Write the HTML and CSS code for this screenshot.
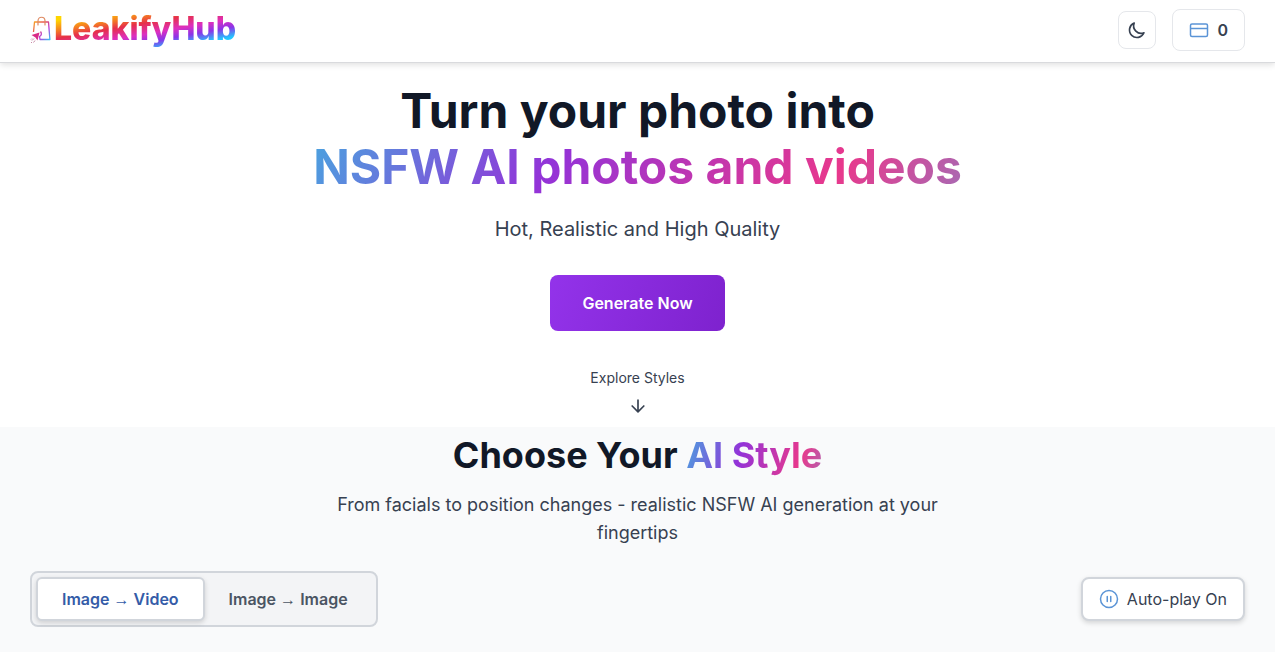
FILE: index.html
```html
<!DOCTYPE html>
<html lang="en">
<head>
    <meta charset="UTF-8">
    <meta name="viewport" content="width=device-width, initial-scale=1.0">
    <title>LeakifyHub</title>
    <link rel="stylesheet" href="styles.css">
</head>
<body>
    <header class="header">
        <a href="#" class="logo">
            <svg class="logo-icon" viewBox="0 0 22 30" fill="none" aria-hidden="true">
                <defs>
                    <linearGradient id="bag" x1="0" y1="0" x2="1" y2="1">
                        <stop offset="0" stop-color="#f6a623"/>
                        <stop offset="0.35" stop-color="#e8505a"/>
                        <stop offset="0.65" stop-color="#b43be0"/>
                        <stop offset="1" stop-color="#35c4f0"/>
                    </linearGradient>
                </defs>
                <path d="M3.500 17 4.500 7h14l1.400 17.500H10l-.5-3c2-1 2.500-3 1-5" stroke="url(#bag)" stroke-width="1.300" stroke-linejoin="round"/>
                <path d="M8 10V6c0-5 7-5 7 0v4" stroke="#df8a62" stroke-width="1.200" stroke-linecap="round"/>
                <path d="m1.500 20 8-2.500-2 8-2-3z" fill="#d92c86"/>
                <path d="m4 23.500-2 2M2 23.500l-1 1m4 1-1.500 2M1 27.500h1" stroke="#c98ba8" stroke-width="1"/>
            </svg>
            <span class="logo-text">LeakifyHub</span>
        </a>
        <div class="header-actions">
            <button type="button" class="theme-btn" aria-label="Toggle theme">
                <svg width="20" height="20" viewBox="0 0 24 24" fill="none" stroke="currentColor" stroke-width="2" stroke-linecap="round" stroke-linejoin="round"><path d="M20.354 15.354A9 9 0 0 1 8.646 3.646 9 9 0 1 0 20.354 15.354z"/></svg>
            </button>
            <button type="button" class="credits-btn">
                <svg width="20" height="20" viewBox="0 0 20 20" fill="none" stroke="#5b94d6" stroke-width="1.500"><rect x="1.500" y="4" width="17" height="12.500" rx="1.500"/><path d="M1.500 8.500h17"/></svg>
                <span>0</span>
            </button>
        </div>
    </header>

    <main>
        <!-- hero -->
        <section class="hero">
            <h1>Turn your photo into<br><span class="gradient-text">NSFW AI photos and videos</span></h1>
            <p class="hero-sub">Hot, Realistic and High Quality</p>
            <button type="button" class="cta">Generate Now</button>
            <a href="#styles" class="explore">
                <span>Explore Styles</span>
                <svg width="20" height="20" viewBox="0 0 24 24" fill="none" stroke="currentColor" stroke-width="2" stroke-linecap="round" stroke-linejoin="round"><path d="M12 5v14M5 12l7 7 7-7"/></svg>
            </a>
        </section>

        <!-- styles -->
        <section class="styles" id="styles">
            <h2>Choose Your <span class="gradient-text">AI Style</span></h2>
            <p class="styles-sub">From facials to position changes - realistic NSFW AI generation at your fingertips</p>
            <div class="toolbar">
                <div class="tabs">
                    <button type="button" class="tab active">Image <span class="arrow">→</span> Video</button>
                    <button type="button" class="tab">Image <span class="arrow">→</span> Image</button>
                </div>
                <button type="button" class="autoplay">
                    <svg width="20" height="20" viewBox="0 0 20 20" fill="none" stroke="#5b94d6" stroke-width="1.500" stroke-linecap="round"><circle cx="10" cy="10" r="8.500"/><path d="M8.250 7.500v5M11.750 7.500v5"/></svg>
                    <span>Auto-play On</span>
                </button>
            </div>
        </section>
    </main>
</body>
</html>
```
FILE: styles.css
```css
* {
    margin: 0;
    padding: 0;
    box-sizing: border-box;
}
body {
    font-family: Inter, "Liberation Sans", sans-serif;
    color: #374151;
    background-color: #fff;
    line-height: 24px;
}
button {
    font: inherit;
    color: inherit;
    cursor: pointer;
}
a {
    color: inherit;
    text-decoration: none;
}
svg {
    display: block;
    flex-shrink: 0;
}

/* header */
.header {
    display: flex;
    justify-content: space-between;
    align-items: center;
    padding: 9px 30px 11px;
    border-bottom: 1px solid #d9dadd;
    box-shadow: 0 2px 6px rgba(0, 0, 0, .12);
}
.logo {
    display: flex;
    align-items: center;
    gap: 2px;
}
.logo-icon {
    width: 22px;
    height: 30px;
}
.logo-text {
    padding-bottom: 2px;
    font-size: 32px;
    font-weight: 800;
    line-height: 36px;
    background: linear-gradient(170deg, #ffd500 14%, #f58220 28%, #e6304a 40%, #dd2fc0 56%, #8a35e8 68%, #22c7ff 82%);
    -webkit-background-clip: text;
    background-clip: text;
    color: transparent;
}
.header-actions {
    display: flex;
    align-items: center;
    gap: 16px;
}
.theme-btn {
    display: flex;
    align-items: center;
    justify-content: center;
    width: 38px;
    height: 38px;
    border: 1px solid #e5e7eb;
    border-radius: 8px;
    background-color: #fff;
}
.credits-btn {
    display: flex;
    align-items: center;
    gap: 8px;
    height: 42px;
    padding: 0 16px;
    border: 1px solid #e5e7eb;
    border-radius: 8px;
    background-color: #fff;
    font-weight: 600;
}

/* hero */
.hero {
    display: flex;
    flex-direction: column;
    align-items: center;
    padding: 20px 30px 11px;
    text-align: center;
}
h1 {
    font-size: 48px;
    font-weight: 700;
    line-height: 56px;
    color: #111827;
}
.gradient-text {
    background: linear-gradient(120deg, #4aa3df 0%, #9333d8 37%, #e8388c 80%, #a070b8 102%);
    -webkit-background-clip: text;
    background-clip: text;
    color: transparent;
}
.hero-sub {
    margin-top: 20px;
    font-size: 20px;
    line-height: 28px;
}
.cta {
    margin-top: 32px;
    padding: 16px 32px;
    border: 0;
    border-radius: 8px;
    background: linear-gradient(110deg, #9333ea, #7e22ce);
    color: #fff;
    font-weight: 600;
}
.explore {
    display: flex;
    flex-direction: column;
    align-items: center;
    gap: 8px;
    margin-top: 37px;
    font-size: 14px;
    line-height: 20px;
}

/* styles section */
.styles {
    padding: 6px 30px 32px;
    background-color: #f9fafb;
    text-align: center;
}
h2 {
    font-size: 36px;
    font-weight: 700;
    line-height: 44px;
    color: #111827;
}
h2 .gradient-text {
    background-image: linear-gradient(105deg, #4aa3df 0%, #9333d8 40%, #e8388c 82%, #a070b8 106%);
}
.styles-sub {
    max-width: 672px;
    margin: 14px auto 24px;
    font-size: 18px;
    line-height: 28px;
}
.toolbar {
    display: flex;
    justify-content: space-between;
    align-items: center;
}
.tabs {
    display: flex;
    padding: 4px;
    border: 2px solid #d1d5db;
    border-radius: 8px;
    background-color: #f3f4f6;
}
.tab {
    padding: 8px 24px;
    border: 0;
    border-radius: 6px;
    background-color: transparent;
    color: #4b5563;
    font-weight: 600;
}
.tab.active {
    border: 2px solid #d1d5db;
    background-color: #fff;
    color: #355ca8;
    box-shadow: 0 2px 5px rgba(0, 0, 0, .15);
}
.arrow {
    font-family: "Liberation Sans", sans-serif;
    line-height: 1;
}
.autoplay {
    display: flex;
    align-items: center;
    gap: 8px;
    padding: 8px 16px;
    border: 2px solid #d1d5db;
    border-radius: 8px;
    background-color: #fff;
    box-shadow: 0 2px 5px rgba(0, 0, 0, .15);
}
```
